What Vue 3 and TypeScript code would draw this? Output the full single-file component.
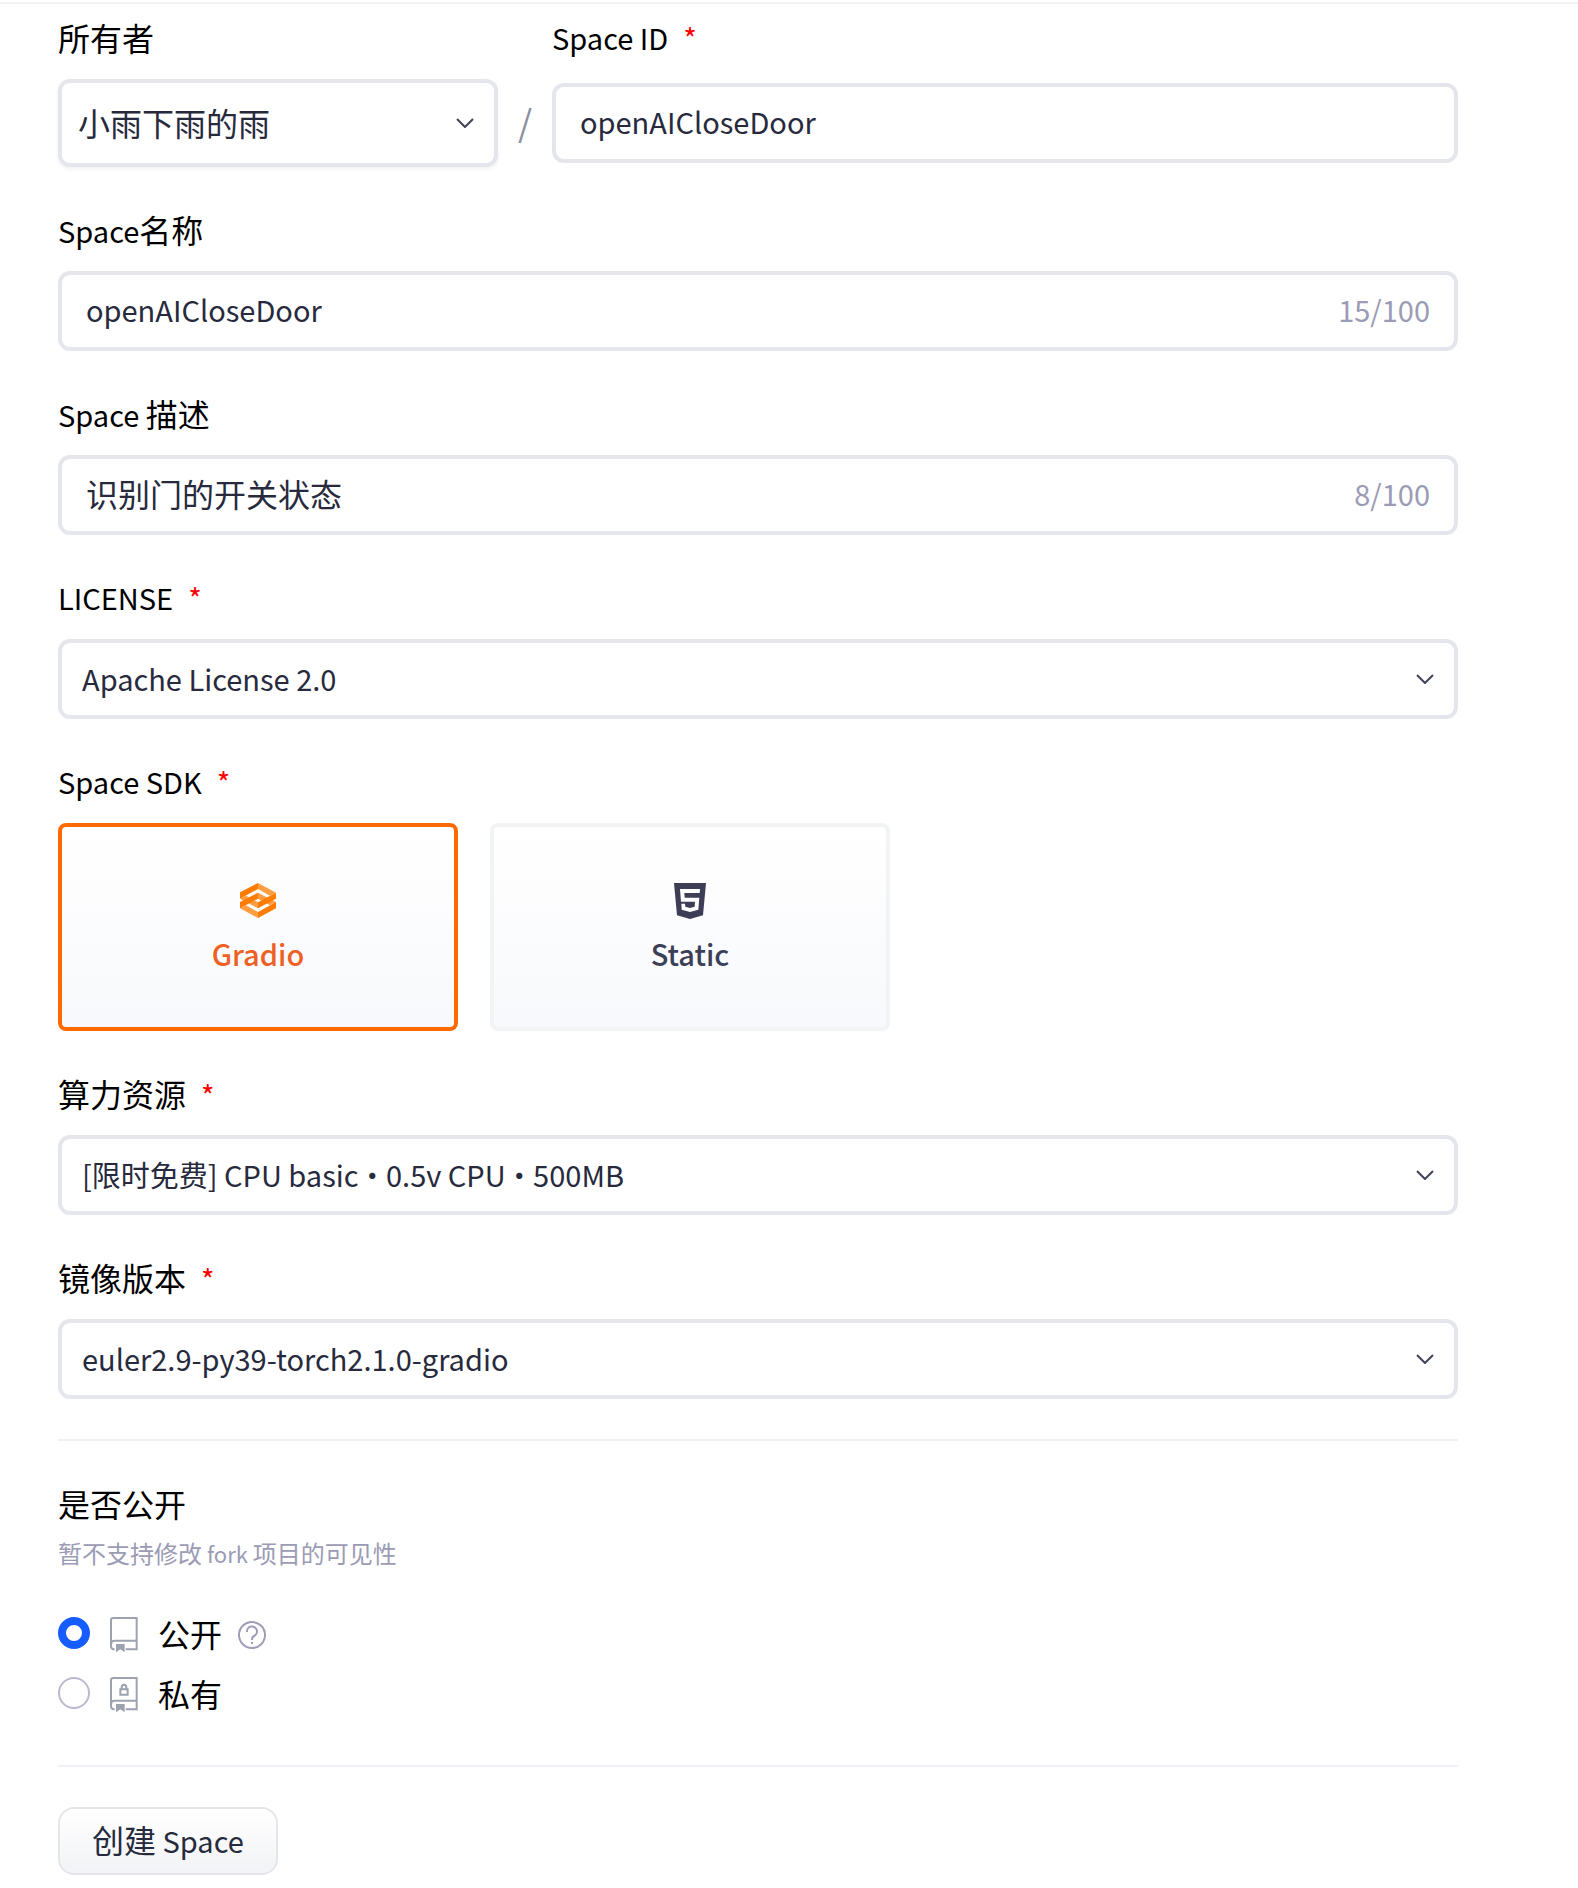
<script setup lang="ts">
import { ref } from 'vue'

const owner = ref('小雨下雨的雨')
const spaceId = ref('openAICloseDoor')
const spaceName = ref('openAICloseDoor')
const description = ref('识别门的开关状态')
const license = ref('Apache License 2.0')
const sdk = ref('Gradio')
const compute = ref('[限时免费] CPU basic · 0.5v CPU · 500MB')
const image = ref('euler2.9-py39-torch2.1.0-gradio')
const visibility = ref('public')
</script>

<template>
  <main class="page">
    <form class="form" @submit.prevent>
      <div class="identity">
        <div class="owner">
          <label class="label" for="owner"><span class="han">所有者</span></label>
          <div class="picker picker-owner">
            <select id="owner" v-model="owner" class="control han">
              <option>小雨下雨的雨</option>
            </select>
            <svg class="chevron" viewBox="0 0 18 10" aria-hidden="true"><path d="M1 1l8 8 8-8" /></svg>
          </div>
        </div>
        <span class="slash">/</span>
        <div class="space-id">
          <label class="label" for="space-id">Space ID<span class="star">*</span></label>
          <div class="box">
            <input id="space-id" v-model="spaceId" type="text" />
          </div>
        </div>
      </div>

      <div class="field">
        <label class="label" for="space-name">Space<span class="han">名称</span></label>
        <div class="box">
          <input id="space-name" v-model="spaceName" type="text" maxlength="100" />
          <span class="count">{{ spaceName.length }}/100</span>
        </div>
      </div>

      <div class="field">
        <label class="label" for="description">Space <span class="han">描述</span></label>
        <div class="box">
          <input id="description" v-model="description" class="han" type="text" maxlength="100" />
          <span class="count">{{ description.length }}/100</span>
        </div>
      </div>

      <div class="field">
        <label class="label" for="license">LICENSE<span class="star">*</span></label>
        <div class="picker">
          <select id="license" v-model="license" class="control">
            <option>Apache License 2.0</option>
          </select>
          <svg class="chevron" viewBox="0 0 18 10" aria-hidden="true"><path d="M1 1l8 8 8-8" /></svg>
        </div>
      </div>

      <div class="field">
        <div id="sdk-label" class="label">Space SDK<span class="star">*</span></div>
        <div class="cards" role="group" aria-labelledby="sdk-label">
          <button
            type="button"
            class="card"
            :class="{ selected: sdk === 'Gradio' }"
            :aria-pressed="sdk === 'Gradio'"
            @click="sdk = 'Gradio'"
          >
            <svg class="logo" viewBox="0 0 108 108" aria-hidden="true">
              <g fill="#ff9d42">
                <path d="M54 0l54 29-18 9-36-20z" />
                <path d="M0 47l18-9 36 20v18z" />
                <path d="M54 29l54 28-18 10-36-20z" />
                <path d="M0 76l18-9 36 20v18z" />
              </g>
              <g fill="#ff7c00">
                <path d="M0 28L54 0v18L0 47z" />
                <path d="M108 29v18L54 76V58z" />
                <path d="M0 57l54-28v18L0 76z" />
                <path d="M108 57v19l-54 29V87z" />
              </g>
            </svg>
            <span>Gradio</span>
          </button>
          <button
            type="button"
            class="card"
            :class="{ selected: sdk === 'Static' }"
            :aria-pressed="sdk === 'Static'"
            @click="sdk = 'Static'"
          >
            <svg class="logo" viewBox="0 0 108 108" aria-hidden="true">
              <path fill="#3d3d55" d="M6 0h96l-9 97-39 11-39-11z" />
              <path fill="#fff" d="M24 18h60l-1 12H37l1 14h44l-3 36-25 7-25-7-1-18h11l1 9 14 4 14-4 1-15H27z" />
            </svg>
            <span>Static</span>
          </button>
        </div>
      </div>

      <div class="field">
        <label class="label" for="compute"><span class="han">算力资源</span><span class="star">*</span></label>
        <div class="picker">
          <select id="compute" v-model="compute" class="control compact">
            <option>[限时免费] CPU basic · 0.5v CPU · 500MB</option>
          </select>
          <svg class="chevron" viewBox="0 0 18 10" aria-hidden="true"><path d="M1 1l8 8 8-8" /></svg>
        </div>
      </div>

      <div class="field">
        <label class="label" for="image"><span class="han">镜像版本</span><span class="star">*</span></label>
        <div class="picker">
          <select id="image" v-model="image" class="control">
            <option>euler2.9-py39-torch2.1.0-gradio</option>
          </select>
          <svg class="chevron" viewBox="0 0 18 10" aria-hidden="true"><path d="M1 1l8 8 8-8" /></svg>
        </div>
      </div>

      <fieldset class="visibility">
        <legend class="han">是否公开</legend>
        <p class="hint">暂不支持修改<span class="hint-latin"> fork </span>项目的可见性</p>
        <label class="choice">
          <input v-model="visibility" type="radio" name="visibility" value="public" />
          <svg class="book" viewBox="0 0 84 108" aria-hidden="true">
            <path class="line" d="M14 97C6 97 3 93 3 86V10q0-7 7-7h70v94H47M3 81q1-10 11-10h66" />
            <path class="solid" d="M18 81h26v25l-13-9-13 9z" />
          </svg>
          <span class="han">公开</span>
          <svg class="help" viewBox="0 0 28 28" aria-hidden="true">
            <circle cx="14" cy="14" r="13" />
            <path d="M9 11a5 5 0 1 1 7 4q-2 1-2 3v1" />
            <path d="M14 21v2" />
          </svg>
        </label>
        <label class="choice">
          <input v-model="visibility" type="radio" name="visibility" value="private" />
          <svg class="book" viewBox="0 0 84 108" aria-hidden="true">
            <path class="line" d="M14 97C6 97 3 93 3 86V10q0-7 7-7h70v94H47M3 81q1-10 11-10h66" />
            <path class="solid" d="M18 81h26v25l-13-9-13 9z" />
            <path class="line" d="M31 37h22v16H31zM35 37v-6q0-8 7-8t7 8v6" />
          </svg>
          <span class="han">私有</span>
        </label>
      </fieldset>

      <div class="actions">
        <button type="submit" class="create"><span class="han">创建</span> Space</button>
      </div>
    </form>
  </main>
</template>

<style>
body {
  margin: 0;
  background: #fff;
}
</style>

<style scoped>
.page {
  padding-top: 2px;
  font-family: "Noto Sans CJK SC", sans-serif;
  font-size: 29px;
  line-height: 44px;
  color: #000;
}

.form {
  border-top: 2px solid #f0f0f7;
  padding: 11px 120px 12px 58px;
}

.han {
  font-size: 32px;
}

input,
select,
button {
  box-sizing: border-box;
  margin: 0;
  font-family: inherit;
  font-size: 29px;
  color: #272a3d;
}

input.han,
select.han {
  font-size: 32px;
}

.label {
  display: block;
  height: 44px;
  margin-bottom: 20px;
  white-space: pre-wrap;
}

.star {
  margin-left: 15px;
  color: #f00;
}

.identity {
  display: flex;
}

.owner {
  flex: 0 0 440px;
}

.space-id {
  flex: 1;
  min-width: 0;
}

.space-id .box {
  margin-top: 24px;
}

.slash {
  flex: 0 0 54px;
  margin-top: 64px;
  line-height: 84px;
  text-align: center;
  font-size: 36px;
  color: #8b8fa3;
}

.field {
  margin-top: 40px;
}

.box,
.control {
  box-sizing: border-box;
  width: 100%;
  height: 80px;
  border: 4px solid #e5e6eb;
  border-radius: 12px;
  background: #fff;
}

.box {
  display: flex;
  align-items: center;
  padding: 0 24px 4px;
}

.box input {
  flex: 1;
  min-width: 0;
  height: 68px;
  padding: 0;
  border: 0;
  outline: 0;
  background: transparent;
}

.count {
  color: #9b9bb5;
}

.picker {
  display: grid;
  align-items: center;
}

.picker > * {
  grid-area: 1 / 1;
}

.control {
  appearance: none;
  padding: 0 60px 2px 20px;
}

.control.compact {
  font-feature-settings: "palt", "pwid";
}

.picker-owner .control {
  height: 88px;
  padding-left: 16px;
  box-shadow: 0 2px 4px rgba(0, 0, 0, 0.06);
}

.chevron {
  justify-self: end;
  width: 18px;
  height: 10px;
  margin-right: 24px;
  fill: none;
  stroke: #40435c;
  stroke-width: 2;
  pointer-events: none;
}

.cards {
  display: flex;
  gap: 32px;
}

.card {
  display: flex;
  flex: 0 1 400px;
  flex-direction: column;
  align-items: center;
  justify-content: center;
  gap: 10px;
  height: 208px;
  padding: 6px 0 0;
  border: 4px solid #f2f3f5;
  border-radius: 8px;
  background: linear-gradient(#fff, #f8f9fc) padding-box;
  font-weight: 500;
  line-height: 48px;
  color: #3b3f58;
}

.card.selected {
  border-color: #ff6a00;
  color: #ee6023;
}

.logo {
  width: 36px;
  height: 36px;
}

.visibility {
  margin: 40px 0 0;
  padding: 40px 0 0;
  border: 0;
  border-top: 2px solid #f0f0f7;
}

.visibility legend {
  float: left;
  width: 100%;
  margin-bottom: 4px;
  padding: 0;
}

.hint {
  clear: both;
  margin: 0 0 26px;
  font-size: 24px;
  line-height: 48px;
  color: #9b9bb5;
}

.hint-latin {
  font-size: 22px;
}

.choice {
  display: flex;
  align-items: center;
  height: 60px;
}

.choice input {
  appearance: none;
  width: 32px;
  height: 32px;
  border: 2px solid #bbb9d0;
  border-radius: 50%;
  background: #fff;
}

.choice input:checked {
  border: 8px solid #165dff;
}

.book {
  width: 28px;
  height: 36px;
  margin: 4px 20px 0;
}

.book .line {
  fill: none;
  stroke: #9ca3af;
  stroke-width: 6;
}

.book .solid {
  fill: #9ca3af;
}

.help {
  width: 28px;
  height: 28px;
  margin: 4px 0 0 16px;
  fill: none;
  stroke: #a09cb8;
  stroke-width: 2;
}

.actions {
  margin-top: 42px;
  padding-top: 40px;
  border-top: 2px solid #f0f0f7;
}

.create {
  display: block;
  height: 68px;
  padding: 0 32px 4px;
  border: 2px solid #e5e6eb;
  border-radius: 16px;
  background: linear-gradient(#fff, #f2f3f6) padding-box;
  line-height: 48px;
}
</style>
